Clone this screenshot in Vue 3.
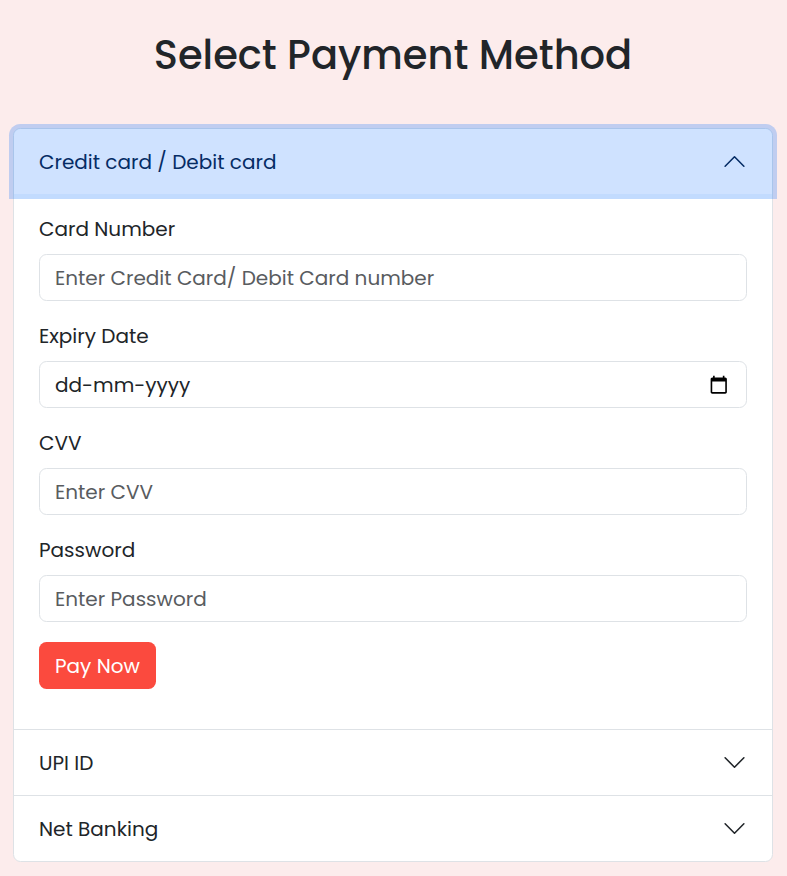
<script setup>
import { ref } from 'vue'

const open = ref('card')
const methods = [
  { id: 'card', title: 'Credit card / Debit card' },
  { id: 'upi', title: 'UPI ID' },
  { id: 'bank', title: 'Net Banking' }
]
const fields = [
  { id: 'number', label: 'Card Number', hint: 'Enter Credit Card/ Debit Card number' },
  { id: 'expiry', label: 'Expiry Date', hint: 'dd-mm-yyyy', date: true },
  { id: 'cvv', label: 'CVV', hint: 'Enter CVV' },
  { id: 'password', label: 'Password', hint: 'Enter Password' }
]
</script>

<template>
  <main class="page">
    <h1 class="title">Select Payment Method</h1>
    <div class="accordion">
      <section v-for="m in methods" :key="m.id" class="item">
        <button
          type="button"
          class="header"
          :class="{ active: open === m.id }"
          @click="open = m.id"
        >
          <span>{{ m.title }}</span>
          <svg class="chevron" viewBox="0 0 16 16" fill="none" stroke="currentColor" stroke-linecap="round" stroke-linejoin="round">
            <path d="m2 5 6 6 6-6" />
          </svg>
        </button>
        <form v-if="m.id === 'card' && open === 'card'" class="body" @submit.prevent>
          <div v-for="f in fields" :key="f.id" class="field">
            <label class="label" :for="f.id">{{ f.label }}</label>
            <div v-if="f.date" :id="f.id" class="control date">
              <span>{{ f.hint }}</span>
              <svg class="calendar" viewBox="0 0 24 24">
                <path d="M20 3h-1V1h-2v2H7V1H5v2H4c-1.1 0-2 .9-2 2v16c0 1.1.9 2 2 2h16c1.1 0 2-.9 2-2V5c0-1.1-.9-2-2-2zm0 18H4V8h16v13z" />
              </svg>
            </div>
            <input v-else :id="f.id" class="control" :placeholder="f.hint" autocomplete="off" />
          </div>
          <button type="submit" class="pay">Pay Now</button>
        </form>
      </section>
    </div>
  </main>
</template>

<style>
body {
  background: #fcecec;
}
</style>

<style scoped>
.page {
  box-sizing: border-box;
  min-height: 876px;
  padding: 31px 14px 14px 13px;
  color: #212529;
  font-family: Poppins, Inter, sans-serif;
  font-feature-settings: "cv11";
  font-size: 20px;
  line-height: 30px;
}
.title {
  margin: 0 0 49px;
  font-size: 40px;
  font-weight: 500;
  line-height: 48px;
  text-align: center;
}
.accordion {
  border: 1px solid #dee2e6;
  border-radius: 7.5px;
  background: #fff;
}
.item + .item {
  border-top: 1px solid #dee2e6;
}
.header {
  display: flex;
  align-items: center;
  justify-content: space-between;
  box-sizing: border-box;
  width: 100%;
  height: 65px;
  padding: 0 25px;
  border: 0;
  background: none;
  color: inherit;
  font: inherit;
  font-feature-settings: inherit;
}
.header.active {
  position: relative;
  border-radius: 6.5px 6.5px 0 0;
  background: #cfe2ff;
  color: #052c65;
  box-shadow: 0 0 0 5px rgba(13, 110, 253, 0.25);
}
.chevron {
  width: 25px;
  height: 25px;
}
.active .chevron {
  transform: rotate(180deg);
}
.body {
  display: flex;
  flex-direction: column;
  align-items: flex-start;
  gap: 20px;
  padding: 20px 25px 40px;
}
.field {
  display: flex;
  flex-direction: column;
  gap: 10px;
  width: 100%;
}
.label {
  height: 30px;
}
.control {
  box-sizing: border-box;
  width: 100%;
  height: 47px;
  padding: 1px 15px 0;
  border: 1px solid #dee2e6;
  border-radius: 7.5px;
  outline: none;
  background: #fff;
  color: inherit;
  font: inherit;
  font-feature-settings: inherit;
}
.control::placeholder {
  color: #595c5f;
  opacity: 1;
}
.date {
  display: flex;
  align-items: center;
  justify-content: space-between;
}
.calendar {
  width: 19.5px;
  height: 19.5px;
  margin: 0 2.5px 1px 0;
  fill: #000;
}
.pay {
  width: 117px;
  height: 47px;
  padding: 1px 0 0;
  border: 0;
  border-radius: 7.5px;
  background: #fb4a3e;
  color: #fff;
  font: inherit;
  font-feature-settings: inherit;
  white-space: nowrap;
}
</style>
